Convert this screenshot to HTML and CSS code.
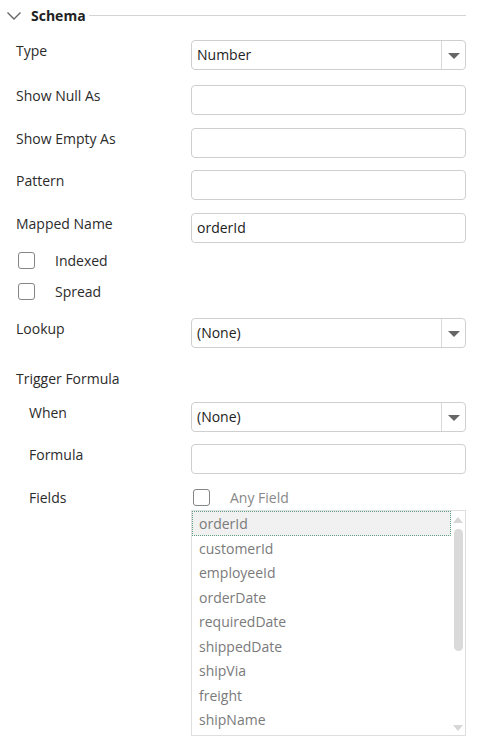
FILE: index.html
```html
<!DOCTYPE html>
<html lang="en">
<head>
<meta charset="utf-8">
<title>Schema</title>
<link rel="stylesheet" href="styles.css">
</head>
<body>
<section class="panel">
  <header class="panel-head">
    <svg class="chevron" width="16" height="10" viewBox="0 0 16 10"><polyline points="1.5,1.5 8,8 14.5,1.5" fill="none" stroke="#666" stroke-width="1.4"/></svg>
    <span class="panel-title">Schema</span>
    <span class="panel-rule"></span>
  </header>

  <div class="field first">
    <label class="field-label">Type</label>
    <div class="select"><span class="select-value">Number</span><span class="select-btn"><i class="caret"></i></span></div>
  </div>
  <div class="field">
    <label class="field-label">Show Null As</label>
    <div class="input"></div>
  </div>
  <div class="field">
    <label class="field-label">Show Empty As</label>
    <div class="input"></div>
  </div>
  <div class="field tight">
    <label class="field-label">Pattern</label>
    <div class="input"></div>
  </div>
  <div class="field">
    <label class="field-label">Mapped Name</label>
    <div class="input"><span class="input-value">orderId</span></div>
  </div>

  <div class="check-row first-check"><span class="box"></span><span class="check-label">Indexed</span></div>
  <div class="check-row"><span class="box"></span><span class="check-label">Spread</span></div>

  <div class="field lookup">
    <label class="field-label">Lookup</label>
    <div class="select"><span class="select-value">(None)</span><span class="select-btn"><i class="caret"></i></span></div>
  </div>

  <div class="group-label">Trigger Formula</div>

  <div class="field sub when">
    <label class="field-label">When</label>
    <div class="select"><span class="select-value">(None)</span><span class="select-btn"><i class="caret"></i></span></div>
  </div>
  <div class="field sub tight">
    <label class="field-label">Formula</label>
    <div class="input"></div>
  </div>
  <div class="field sub fields">
    <label class="field-label">Fields</label>
    <div class="fields-col">
      <div class="any-field"><span class="box"></span><span class="any-label">Any Field</span></div>
      <div class="listbox">
        <ul class="list-items">
          <li class="item focused">orderId</li>
          <li class="item">customerId</li>
          <li class="item">employeeId</li>
          <li class="item">orderDate</li>
          <li class="item">requiredDate</li>
          <li class="item">shippedDate</li>
          <li class="item">shipVia</li>
          <li class="item">freight</li>
          <li class="item">shipName</li>
        </ul>
        <div class="scrollbar">
          <i class="sb-up"></i>
          <div class="sb-track"><div class="sb-thumb"></div></div>
          <i class="sb-down"></i>
        </div>
      </div>
    </div>
  </div>
</section>
</body>
</html>
```

FILE: styles.css
```css
* { box-sizing: border-box; }

html, body {
  margin: 0;
  padding: 0;
  background: #fff;
}

body {
  font-family: "Open Sans", "Noto Sans", sans-serif;
  font-size: 14px;
  line-height: 19px;
  color: #333;
  overflow: hidden;
  height: 739px;
}

.panel {
  width: 466px;
}

/* collapsible section header */
.panel-head {
  display: flex;
  align-items: center;
  height: 30px;
  padding-left: 6px;
}

.chevron {
  flex: none;
  margin-top: 1px;
}

.panel-title {
  font-weight: 700;
  color: #222;
  margin-left: 9px;
}

.panel-rule {
  flex: 1;
  height: 1px;
  background: #d4d4d4;
  margin-left: 3px;
}

/* label + control rows */
.field {
  display: grid;
  grid-template-columns: 191px 1fr;
  margin-top: 13px;
}

.field.first { margin-top: 10px; }
.field.first + .field { margin-top: 15px; }
.field.tight { margin-top: 12px; }

.field-label {
  padding-left: 16px;
  padding-top: 1px;
  color: #2b2b2b;
}

.field.sub .field-label { padding-left: 29px; }

.input,
.select {
  height: 30px;
  border: 1px solid #cfcfcf;
  border-radius: 4px;
  background: #fff;
}

.input-value,
.select-value {
  display: block;
  padding-left: 5px;
  line-height: 28px;
  color: #222;
}

.select {
  display: flex;
}

.select-value { flex: 1; }

.select-btn {
  width: 24px;
  border-left: 1px solid #d9d9d9;
  display: flex;
  align-items: center;
  justify-content: center;
}

.caret {
  width: 0;
  height: 0;
  border-left: 6px solid transparent;
  border-right: 6px solid transparent;
  border-top: 6px solid #666;
  margin-top: 1px;
}

/* checkboxes */
.box {
  flex: none;
  width: 17px;
  height: 17px;
  border: 1.5px solid #858585;
  border-radius: 3px;
  background: #fff;
}

.check-row {
  display: flex;
  align-items: center;
  height: 31px;
  padding-left: 18px;
}

.check-row.first-check { margin-top: 2px; }

.check-label {
  margin-left: 20px;
  color: #2b2b2b;
}

.field.lookup { margin-top: 11px; }

.group-label {
  padding-left: 16px;
  margin-top: 21px;
  color: #2b2b2b;
}

.field.when { margin-top: 14px; }

.field.fields { margin-top: 13px; }

.fields-col {
  display: flex;
  flex-direction: column;
}

.any-field {
  display: flex;
  align-items: center;
  height: 22px;
  padding-left: 2px;
  margin-top: -1px;
}

.any-label {
  margin-left: 20px;
  color: #888;
}

/* field list */
.listbox {
  display: flex;
  height: 226px;
  margin-top: 2px;
  border: 1px solid #dedede;
  overflow: hidden;
}

.list-items {
  flex: 1;
  list-style: none;
  margin: 0;
  padding: 0;
}

.item {
  height: 24.5px;
  line-height: 26px;
  padding-left: 7px;
  color: #7a7a7a;
}

.item.focused {
  background: #f1f1f1;
  outline: 1px dotted #5f9f82;
  outline-offset: -1px;
}

.scrollbar {
  flex: none;
  width: 14px;
  display: flex;
  flex-direction: column;
  align-items: center;
  padding: 6px 0 4px;
}

.sb-up,
.sb-down {
  width: 0;
  height: 0;
  border-left: 5px solid transparent;
  border-right: 5px solid transparent;
}

.sb-up { border-bottom: 6px solid #d6d6d6; }
.sb-down { border-top: 6px solid #d6d6d6; }

.sb-track {
  flex: 1;
  width: 100%;
  display: flex;
  justify-content: center;
  padding-top: 6px;
}

.sb-thumb {
  width: 9px;
  height: 122px;
  border-radius: 5px;
  background: #dadada;
}
```
